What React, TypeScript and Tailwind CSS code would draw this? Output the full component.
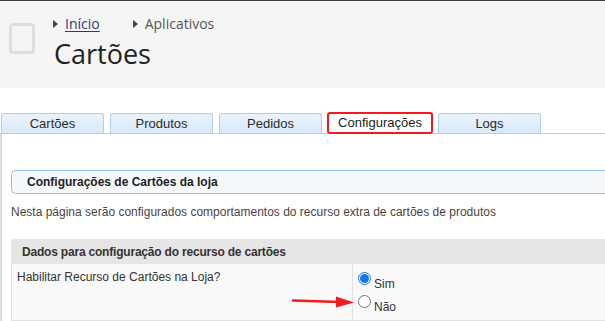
const tabs = ["Cartões", "Produtos", "Pedidos", "Configurações", "Logs"];

const Caret = () => (
  <svg width="5" height="8" viewBox="0 0 5 8" className="mr-[7px]">
    <path d="M0 0 L5 4 L0 8 Z" fill="#444" />
  </svg>
);

const App = () => {
  return (
    <div className="relative w-[605px] h-[321px] overflow-hidden bg-white font-['Liberation_Sans',Arial,sans-serif]">
      {/* page header */}
      <div className="h-[88px] border-t border-[#3b4045] bg-[#f5f5f5] flex font-['Open_Sans',sans-serif]">
        <div className="ml-[9px] mt-[22px] w-[26px] h-[31px] rounded-[4px] border-[3px] border-[#dedede]" />
        <div className="ml-[18px] mt-[14px] flex flex-col">
          <div className="flex items-center text-[14px] leading-[18px]">
            <Caret />
            <a className="text-[#1f3f7a] underline underline-offset-2">Início</a>
            <span className="w-[33px]" />
            <Caret />
            <span className="text-[#555]">Aplicativos</span>
          </div>
          <h1 className="mt-[4px] ml-[1px] text-[27px] leading-[33px] text-[#222]">Cartões</h1>
        </div>
      </div>

      {/* tabs */}
      <div className="mt-[25px] flex items-end gap-[6px] pl-[1px] h-[21px] border-b border-[#aed0ea]">
        {tabs.map((t) =>
          t === "Configurações" ? (
            <div
              key={t}
              className="w-[106px] h-[22px] -mb-[1px] -mx-[1px] rounded-[3px] border-2 border-[#ee1c1c] bg-white flex items-center justify-center text-[13px] text-[#222]"
            >
              {t}
            </div>
          ) : (
            <div
              key={t}
              className="w-[103px] h-[20px] rounded-t-[3px] border border-b-0 border-[#aed0ea] bg-gradient-to-b from-[#eaf3fc] to-[#d9e9f8] flex items-center justify-center text-[13px] text-[#2b2b2b]"
            >
              {t}
            </div>
          )
        )}
      </div>

      {/* panel */}
      <div className="border-l-2 border-[#dcdcdc] pl-[9px] pt-[36px] h-[200px]">
        <div className="h-[24px] rounded-l-[5px] border border-r-0 border-[#93bfe9] bg-[#f5f9fd] flex items-center pl-[15px] text-[12px] font-bold text-[#222]">
          Configurações de Cartões da loja
        </div>
        <p className="mt-[10px] text-[12px] leading-[16px] text-[#4a4444]">
          Nesta página serão configurados comportamentos do recurso extra de cartões de produtos
        </p>
        <div className="mt-[19px] h-[25px] bg-[#e6e6e6] flex items-center pl-[11px] text-[12px] font-bold tracking-[-0.2px] text-[#333]">
          Dados para configuração do recurso de cartões
        </div>
        <div className="h-[57px] bg-[#f9f9f9] border-l border-b border-[#e2e2e2] flex text-[12px] text-[#333]">
          <div className="w-[341px] border-r border-[#e2e2e2] pl-[5px] pt-[5px] leading-[16px]">
            Habilitar Recurso de Cartões na Loja?
          </div>
          <div className="pl-[5px] pt-[8px] flex flex-col gap-[4px]">
            <label className="flex items-start">
              <span className="w-[13px] h-[13px] rounded-full border border-[#1a73e8] bg-white flex items-center justify-center">
                <span className="w-[9px] h-[9px] rounded-full bg-[#1a73e8]" />
              </span>
              <span className="ml-[3px] mt-[5px] leading-[14px]">Sim</span>
            </label>
            <label className="flex items-start">
              <span className="w-[13px] h-[13px] rounded-full border border-[#767676] bg-white" />
              <span className="ml-[3px] mt-[5px] leading-[14px]">Não</span>
            </label>
          </div>
        </div>
      </div>

      {/* annotation arrow */}
      <svg className="absolute left-[290px] top-[293px]" width="70" height="16" viewBox="0 0 70 16">
        <path d="M3 7.5 L50 9" stroke="#ee1c1c" strokeWidth="2.5" strokeLinecap="round" />
        <path d="M46 3.5 L64 9.5 L46 14.5 Z" fill="#ee1c1c" />
      </svg>
    </div>
  );
};

export default App;
